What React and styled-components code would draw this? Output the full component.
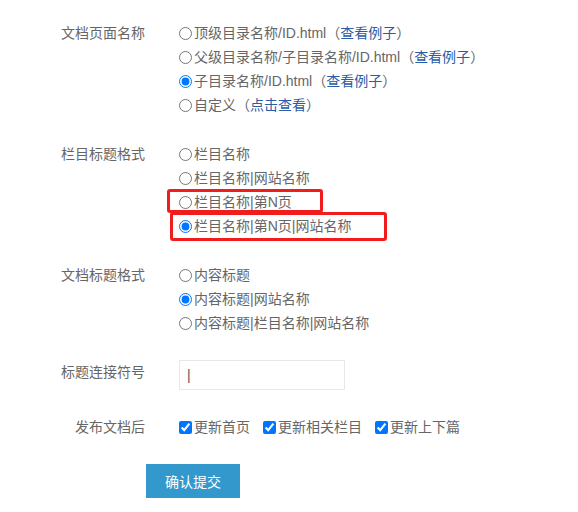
import styled, { createGlobalStyle } from 'styled-components';

const GlobalStyle = createGlobalStyle`
  html, body {
    margin: 0;
    padding: 0;
    background: #fff;
  }
  body {
    font-family: "Liberation Sans", "Noto Sans CJK SC", sans-serif;
    font-size: 14px;
    color: #666;
  }
`;

const Form = styled.form`
  padding-top: 21px;
  display: flex;
  flex-direction: column;
  gap: 25px;
`;

const FormItem = styled.div`
  display: grid;
  grid-template-columns: 145px 1fr;
  column-gap: 34px;
  align-items: start;
`;

const Label = styled.div`
  text-align: right;
  line-height: 24px;
  color: #666;
  white-space: nowrap;
`;

const OptionList = styled.div`
  display: flex;
  flex-direction: column;
`;

const Option = styled.label`
  position: relative;
  display: flex;
  align-items: center;
  height: 24px;
  line-height: 24px;
  color: #666;
  white-space: nowrap;

  ${props => props.$mark && `
    &::after {
      content: '';
      position: absolute;
      left: ${props.$mark.left}px;
      top: ${props.$mark.top}px;
      width: ${props.$mark.width}px;
      height: ${props.$mark.height}px;
      border: 3px solid #f21c1c;
      border-radius: 3px;
      box-sizing: border-box;
      pointer-events: none;
    }
  `}
`;

const Radio = styled.input.attrs({ type: 'radio' })`
  margin: 0 2px 0 0;
  width: 13px;
  height: 13px;
`;

const Check = styled.input.attrs({ type: 'checkbox' })`
  margin: 0 2px 0 0;
  width: 13px;
  height: 13px;
`;

const Link = styled.a`
  color: #2a5ba5;
  text-decoration: none;
`;

const CheckRow = styled.div`
  display: flex;
  align-items: center;
  gap: 13px;
`;

const TextInput = styled.input`
  width: 166px;
  height: 30px;
  box-sizing: border-box;
  border: 1px solid #e8e8e8;
  padding: 0 7px;
  font-family: inherit;
  font-size: 14px;
  color: #555;
  outline: none;
`;

const SubmitButton = styled.button`
  margin-left: 146px;
  width: 94px;
  height: 34px;
  border: none;
  background: #3399cc;
  color: #fff;
  font-family: inherit;
  font-size: 14px;
  cursor: pointer;
`;

const Example = () => (
  <>（<Link href="#">查看例子</Link>）</>
);

export default function App() {
  return (
    <>
      <GlobalStyle />
      <Form onSubmit={e => e.preventDefault()}>
        <FormItem>
          <Label>文档页面名称</Label>
          <OptionList>
            <Option><Radio name="page" />顶级目录名称/ID.html<Example /></Option>
            <Option><Radio name="page" />父级目录名称/子目录名称/ID.html<Example /></Option>
            <Option><Radio name="page" defaultChecked />子目录名称/ID.html<Example /></Option>
            <Option><Radio name="page" />自定义（<Link href="#">点击查看</Link>）</Option>
          </OptionList>
        </FormItem>

        <FormItem>
          <Label>栏目标题格式</Label>
          <OptionList>
            <Option><Radio name="column" />栏目名称</Option>
            <Option><Radio name="column" />栏目名称|网站名称</Option>
            <Option $mark={{ left: -12, top: -1, width: 156, height: 24 }}>
              <Radio name="column" />栏目名称|第N页
            </Option>
            <Option $mark={{ left: -9, top: -2, width: 217, height: 29 }}>
              <Radio name="column" defaultChecked />栏目名称|第N页|网站名称
            </Option>
          </OptionList>
        </FormItem>

        <FormItem>
          <Label>文档标题格式</Label>
          <OptionList>
            <Option><Radio name="doc" />内容标题</Option>
            <Option><Radio name="doc" defaultChecked />内容标题|网站名称</Option>
            <Option><Radio name="doc" />内容标题|栏目名称|网站名称</Option>
          </OptionList>
        </FormItem>

        <FormItem>
          <Label>标题连接符号</Label>
          <TextInput defaultValue="|" />
        </FormItem>

        <FormItem>
          <Label>发布文档后</Label>
          <CheckRow>
            <Option><Check defaultChecked />更新首页</Option>
            <Option><Check defaultChecked />更新相关栏目</Option>
            <Option><Check defaultChecked />更新上下篇</Option>
          </CheckRow>
        </FormItem>

        <div>
          <SubmitButton type="submit">确认提交</SubmitButton>
        </div>
      </Form>
    </>
  );
}
